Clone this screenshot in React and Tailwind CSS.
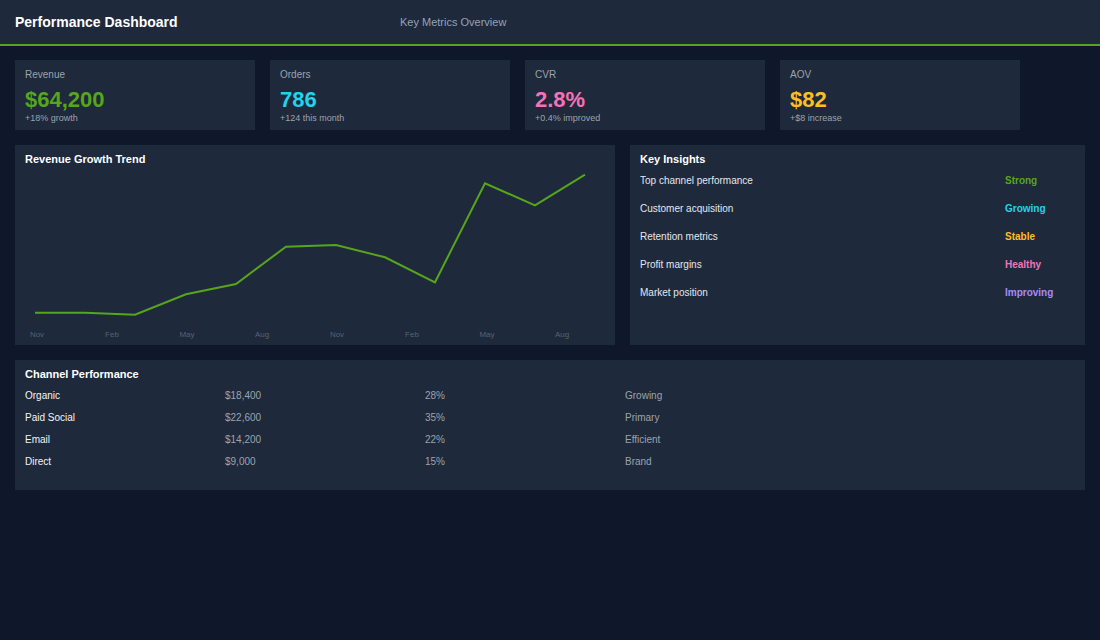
import React from "react";

const kpis = [
  { label: "Revenue", value: "$64,200", note: "+18% growth", color: "text-[#56a61b]" },
  { label: "Orders", value: "786", note: "+124 this month", color: "text-[#22d3ee]" },
  { label: "CVR", value: "2.8%", note: "+0.4% improved", color: "text-[#f472b6]" },
  { label: "AOV", value: "$82", note: "+$8 increase", color: "text-[#fbbf24]" },
];

const insights = [
  { label: "Top channel performance", status: "Strong", color: "text-[#56a61b]" },
  { label: "Customer acquisition", status: "Growing", color: "text-[#22d3ee]" },
  { label: "Retention metrics", status: "Stable", color: "text-[#fbbf24]" },
  { label: "Profit margins", status: "Healthy", color: "text-[#f472b6]" },
  { label: "Market position", status: "Improving", color: "text-[#a78bfa]" },
];

const channels = [
  { name: "Organic", revenue: "$18,400", share: "28%", note: "Growing" },
  { name: "Paid Social", revenue: "$22,600", share: "35%", note: "Primary" },
  { name: "Email", revenue: "$14,200", share: "22%", note: "Efficient" },
  { name: "Direct", revenue: "$9,000", share: "15%", note: "Brand" },
];

// chart points, in the svg's own coordinates
const points = [
  [20, 146.7], [70, 146.7], [120, 148.7], [171, 128.3], [221, 118], [271, 80.7],
  [321, 79], [370, 91.3], [420, 116.3], [470, 17.3], [520, 39.3], [570, 8.7],
];
const months = ["Nov", "Feb", "May", "Aug", "Nov", "Feb", "May", "Aug"];

function TrendChart() {
  return (
    <svg width="600" height="179" viewBox="0 0 600 179" className="block">
      <polyline
        points={points.map((p) => p.join(",")).join(" ")}
        fill="none"
        stroke="#56a61b"
        strokeWidth="2"
        strokeLinejoin="miter"
      />
      {months.map((m, i) => (
        <text
          key={i}
          x={22 + i * 75}
          y="171"
          textAnchor="middle"
          fontSize="8"
          fill="#566274"
          fontFamily="'Liberation Sans', Arial, sans-serif"
        >
          {m}
        </text>
      ))}
    </svg>
  );
}

export default function App() {
  return (
    <div className="min-h-[640px] bg-[#0f172a] font-['Liberation_Sans',Arial,sans-serif]">
      {/* Header */}
      <header className="h-[46px] flex items-center px-[15px] bg-[#1e293b] border-b-2 border-[#56a61b]">
        <h1 className="w-[385px] text-[14px] font-bold text-white">Performance Dashboard</h1>
        <span className="text-[11px] font-medium text-[#94a3b8]">Key Metrics Overview</span>
      </header>

      <main className="px-[15px] pt-[14px] flex flex-col gap-[15px]">
        {/* KPI cards */}
        <div className="flex gap-[15px]">
          {kpis.map((k) => (
            <div key={k.label} className="w-[240px] h-[70px] bg-[#1e293b] px-[10px] pt-[9px]">
              <div className="text-[10px] leading-[12px] text-[#9ca3af]">{k.label}</div>
              <div className={`mt-[6px] text-[22px] leading-[26px] font-bold ${k.color}`}>{k.value}</div>
              <div className="text-[9px] leading-[11px] text-[#9ca3af]">{k.note}</div>
            </div>
          ))}
        </div>

        {/* Chart + insights */}
        <div className="grid grid-cols-[600px_1fr] gap-[15px]">
          <div className="h-[200px] bg-[#1e293b] pt-[7px]">
            <h2 className="px-[10px] text-[11px] leading-[14px] font-bold text-white">Revenue Growth Trend</h2>
            <TrendChart />
          </div>

          <div className="h-[200px] bg-[#1e293b] pt-[7px] px-[10px]">
            <h2 className="text-[11px] leading-[14px] font-bold text-white">Key Insights</h2>
            {insights.map((row) => (
              <div key={row.label} className="flex items-center h-[28px] text-[10px]">
                <span className="flex-1 text-[#e5e7eb]">{row.label}</span>
                <span className={`w-[70px] font-bold ${row.color}`}>{row.status}</span>
              </div>
            ))}
          </div>
        </div>

        {/* Channel table */}
        <div className="h-[130px] bg-[#1e293b] pt-[7px] px-[10px]">
          <h2 className="text-[11px] leading-[14px] font-bold text-white">Channel Performance</h2>
          <div className="mt-[3px]">
            {channels.map((c) => (
              <div key={c.name} className="grid grid-cols-[200px_200px_200px_1fr] h-[22px] items-center text-[10px]">
                <span className="text-[#f3f4f6]">{c.name}</span>
                <span className="text-[#9ca3af]">{c.revenue}</span>
                <span className="text-[#9ca3af]">{c.share}</span>
                <span className="text-[#9ca3af]">{c.note}</span>
              </div>
            ))}
          </div>
        </div>
      </main>
    </div>
  );
}
